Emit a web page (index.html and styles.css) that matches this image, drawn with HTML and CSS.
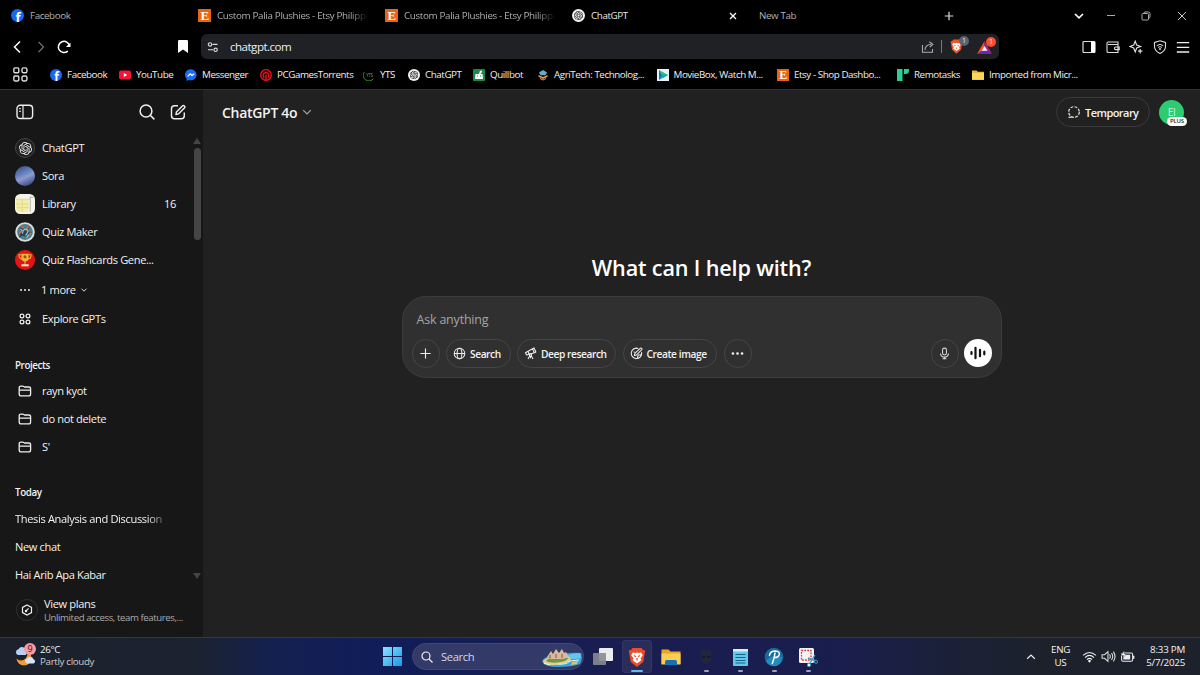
FILE: index.html
```html
<!DOCTYPE html>
<html lang="en">
<head>
    <meta charset="utf-8">
    <title>ChatGPT</title>
    <link rel="stylesheet" href="styles.css">
</head>
<body>
    <svg class="sprite" xmlns="http://www.w3.org/2000/svg">
        <symbol id="fb" viewBox="0 0 12 12"><circle cx="6" cy="6" r="6" fill="#1668ee"/><text x="6.3" y="11.6" text-anchor="middle" font-size="12" font-weight="700" font-family="Open Sans, sans-serif" fill="#fff">f</text></symbol>
        <symbol id="etsy" viewBox="0 0 12 12"><rect width="12" height="12" fill="#e9640f"/><text x="6" y="10.3" text-anchor="middle" font-size="12" font-weight="700" font-family="Liberation Serif, serif" fill="#fff">E</text></symbol>
        <symbol id="knot" viewBox="0 0 24 24"><path fill="currentColor" d="M22.2819 9.8211a5.9847 5.9847 0 0 0-.5157-4.9108 6.0462 6.0462 0 0 0-6.5098-2.9A6.0651 6.0651 0 0 0 4.9807 4.1818a5.9847 5.9847 0 0 0-3.9977 2.9 6.0462 6.0462 0 0 0 .7427 7.0966 5.98 5.98 0 0 0 .511 4.9107 6.051 6.051 0 0 0 6.5146 2.9001A5.9847 5.9847 0 0 0 13.2599 24a6.0557 6.0557 0 0 0 5.7718-4.2058 5.9894 5.9894 0 0 0 3.9977-2.9001 6.0557 6.0557 0 0 0-.7475-7.0729zm-9.022 12.6081a4.4755 4.4755 0 0 1-2.8764-1.0408l.1419-.0804 4.7783-2.7582a.7948.7948 0 0 0 .3927-.6813v-6.7369l2.02 1.1686a.071.071 0 0 1 .038.052v5.5826a4.504 4.504 0 0 1-4.4945 4.4944zm-9.6607-4.1254a4.4708 4.4708 0 0 1-.5346-3.0137l.142.0852 4.783 2.7582a.7712.7712 0 0 0 .7806 0l5.8428-3.3685v2.3324a.0804.0804 0 0 1-.0332.0615L9.74 19.9502a4.4992 4.4992 0 0 1-6.1408-1.6464zM2.3408 7.8956a4.485 4.485 0 0 1 2.3655-1.9728V11.6a.7664.7664 0 0 0 .3879.6765l5.8144 3.3543-2.0201 1.1685a.0757.0757 0 0 1-.071 0l-4.8303-2.7865A4.504 4.504 0 0 1 2.3408 7.872zm16.5963 3.8558L13.1038 8.364 15.1192 7.2a.0757.0757 0 0 1 .071 0l4.8303 2.7913a4.4944 4.4944 0 0 1-.6765 8.1042v-5.6772a.79.79 0 0 0-.407-.667zm2.0107-3.0231l-.142-.0852-4.7735-2.7818a.7759.7759 0 0 0-.7854 0L9.409 9.2297V6.8974a.0662.0662 0 0 1 .0284-.0615l4.8303-2.7866a4.4992 4.4992 0 0 1 6.6802 4.66zM8.3065 12.863l-2.02-1.1638a.0804.0804 0 0 1-.038-.0567V6.0742a4.4992 4.4992 0 0 1 7.3757-3.4537l-.142.0805L8.704 5.459a.7948.7948 0 0 0-.3927.6813zm1.0976-2.3654l2.602-1.4998 2.6069 1.4998v2.9994l-2.5974 1.4997-2.6067-1.4997Z"/></symbol>
        <symbol id="gpt" viewBox="0 0 12 12"><circle cx="6" cy="6" r="6" fill="#f2f2f2"/><use href="#knot" x="1.8" y="1.8" width="8.4" height="8.4" color="#111"/></symbol>
        <symbol id="folder" viewBox="0 0 14 12"><path d="M1.2 9V2.8Q1.2 1.1 2.9 1.1h1.7q.7 0 1.2.4l.7.5h4.2q1.9 0 1.9 1.8V9q0 1.9-1.9 1.9H3.1Q1.2 10.9 1.2 9zM1.2 5.2h11.4" fill="none" stroke="#eee" stroke-width="1.3"/></symbol>
    </svg>

    <div class="tabs">
        <div class="tab"><svg class="ico13"><use href="#fb"/></svg><span>Facebook</span></div>
        <div class="tab"><svg class="ico13"><use href="#etsy"/></svg><span class="fade">Custom Palia Plushies - Etsy Philippi</span></div>
        <div class="tab"><svg class="ico13"><use href="#etsy"/></svg><span class="fade">Custom Palia Plushies - Etsy Philippi</span></div>
        <div class="tab on"><svg class="ico13"><use href="#gpt"/></svg><span>ChatGPT</span>
            <svg class="tab_x" viewBox="0 0 8 8"><path d="M1 1l6 6M7 1L1 7" stroke="#fff" stroke-width="1.3"/></svg></div>
        <div class="tab"><span>New Tab</span></div>
        <svg class="tab_add" viewBox="0 0 10 10"><path d="M5 .8v8.4M.8 5h8.4" stroke="#ddd" stroke-width="1.2"/></svg>
        <div class="win_btns">
            <svg viewBox="0 0 12 12"><path d="M2 4l4 3.8L10 4" fill="none" stroke="#fff" stroke-width="1.7"/></svg>
            <svg viewBox="0 0 12 12"><path d="M2 5.500h8" stroke="#aaa"/></svg>
            <svg viewBox="0 0 12 12"><path d="M2 4.500q0-1 1-1h4.500q1 0 1 1V9q0 1-1 1H3q-1 0-1-1zM4 3.500V3q0-1 1-1h3.500q1.500 0 1.500 1.500V7q0 1-1.200 1" fill="none" stroke="#aaa"/></svg>
            <svg viewBox="0 0 12 12"><path d="M2 2l8 8M10 2l-8 8" stroke="#ccc"/></svg>
        </div>
    </div>

    <div class="toolbar">
        <div class="nav_btns">
            <svg viewBox="0 0 16 16"><path d="M11 2.500L5.500 8l5.500 5.500" fill="none" stroke="#fff" stroke-width="1.5"/></svg>
            <svg viewBox="0 0 16 16"><path d="M5.500 2.800L10.500 8l-5 5.200" fill="none" stroke="#777" stroke-width="1.2"/></svg>
            <svg viewBox="0 0 16 16"><path d="M11.800 12.100A5.600 5.600 0 1 1 13.500 7" fill="none" stroke="#fff" stroke-width="1.5"/><path d="M14.500 3.500v4.400H9.900z" fill="#fff"/></svg>
        </div>
        <svg class="mark" viewBox="0 0 10 13"><path d="M0 1.200Q0 0 1.200 0h7.600Q10 0 10 1.200V13L5 9.500 0 13z" fill="#fff"/></svg>
        <div class="address">
            <svg class="tune" viewBox="0 0 12 12"><g fill="none" stroke="#ddd" stroke-width="1.1"><circle cx="3" cy="3.400" r="1.700"/><path d="M5.500 3.400h5M1 8.800h5"/><circle cx="8.600" cy="8.800" r="1.700"/></g></svg>
            <span class="url">chatgpt.com</span>
            <svg class="share" viewBox="0 0 14 14"><path d="M1.500 5v7.300h10V9M4 10q0-5 6-5.800M8.300 1.800l3.500 2.400-3 2.800" fill="none" stroke="#aaa" stroke-width="1.1"/></svg>
            <i class="bar"></i>
            <div class="shield">
                <svg viewBox="0 0 12 14"><path d="M3 .5h6l1 1.300 1.500.4-.3 2.300-1 5.500L6 13.700 1.800 10l-1-5.500L.5 2.200 2 1.800z" fill="#f3521f"/><path d="M3 3.500l2 .5L6 3.600 7 4l2-.5 1 1.800-1.500 2.200.5 1.500-3 2.200L3 9l.5-1.500L2 5.300z" fill="#fff"/><path d="M4 6l1 .6M8 6l-1 .6M6 8v1" stroke="#f3521f"/></svg>
                <b class="count gray">1</b>
            </div>
            <div class="shield bat">
                <svg viewBox="0 0 14 12"><path d="M7 0L0 12l7-4z" fill="#ff4a22"/><path d="M7 0l7 12-7-4z" fill="#a32888"/><path d="M0 12h14L7 7.500z" fill="#642bb0"/><path d="M7 4.500L4.300 9h5.400z" fill="#fff"/></svg>
                <b class="count">1</b>
            </div>
        </div>
        <div class="tools">
            <svg viewBox="0 0 14 14"><rect x="1" y="1.500" width="12" height="11" rx="1" fill="none" stroke="#ddd" stroke-width="1.2"/><path d="M9 1.500h4v11H9z" fill="#fff"/></svg>
            <svg viewBox="0 0 14 14"><path d="M12 4.500V2H2.300Q1 2 1 3.300v7.900q0 1.300 1.300 1.300H12V4.500H2M13.200 7H9.500q-1 0-1 1.300t1 1.300h3.700z" fill="none" stroke="#ddd" stroke-width="1.1"/></svg>
            <svg viewBox="0 0 14 14"><path d="M6.200 1.200l1.500 3.900 3.800 1.400-3.800 1.500-1.500 3.900L4.700 8 .9 6.500l3.800-1.400z" fill="none" stroke="#ddd" stroke-width="1.2"/><path d="M11.200 9v4.400M9 11.200h4.400" stroke="#ddd" stroke-width="1.2"/></svg>
            <svg viewBox="0 0 14 14"><path d="M7 .8l5.500 1.700v4.300Q12.300 11 7 13.400 1.700 11 1.500 6.800V2.500z" fill="none" stroke="#ddd" stroke-width="1.1"/><path d="M3.700 5.700q3.300-2.700 6.600 0M5 7.400q2-1.600 4 0" fill="none" stroke="#ddd"/><circle cx="7" cy="9" r="1" fill="#ddd"/></svg>
            <svg viewBox="0 0 14 14"><path d="M.8 2.600h12.400M.8 7.300h12.400M.8 12h12.400" stroke="#eee" stroke-width="1.3"/></svg>
        </div>
    </div>

    <div class="bookmarks">
        <svg class="apps" viewBox="0 0 14 14"><g fill="none" stroke="#ddd" stroke-width="1.3"><rect x=".8" y=".8" width="4.600" height="4.600" rx="1"/><rect x="8.400" y=".8" width="4.600" height="4.600" rx="1.500"/><rect x=".8" y="8.400" width="4.600" height="4.600" rx="1"/><rect x="8.400" y="8.400" width="4.600" height="4.600" rx="1.500"/></g></svg>
        <div class="bm"><svg><use href="#fb"/></svg>Facebook</div>
        <div class="bm"><svg viewBox="0 0 12 12"><rect y="1.600" width="12" height="8.800" rx="2" fill="#f5123b"/><path d="M4.800 4v4l3.400-2z" fill="#fff"/></svg>YouTube</div>
        <div class="bm"><svg viewBox="0 0 12 12"><path d="M6 .3a5.700 5.500 0 1 1-2.300 10.600L1.500 12V9.500A5.700 5.500 0 0 1 6 .3z" fill="#1a6cf5"/><path d="M2.700 7.400l2.500-2.600L7 6.400l2.300-1.700" fill="none" stroke="#fff" stroke-width="1.2"/></svg>Messenger</div>
        <div class="bm"><svg viewBox="0 0 12 12"><circle cx="6" cy="6" r="5.300" fill="#200" stroke="#f01520" stroke-width="1.3"/><path d="M6 5.500V12M4.300 8.700a2.800 2.800 0 1 1 3.400 0" fill="none" stroke="#f01520" stroke-width="1.3"/></svg>PCGamesTorrents</div>
        <div class="bm"><svg viewBox="0 0 12 12"><path d="M1.200 3.200A5.500 5.500 0 0 0 10.500 9.500" fill="none" stroke="#3c8c28"/><text x="6.300" y="7.500" text-anchor="middle" font-size="4.800" font-family="Open Sans, sans-serif" fill="#5aa83e">YTS</text></svg>YTS</div>
        <div class="bm"><svg><use href="#gpt"/></svg>ChatGPT</div>
        <div class="bm"><svg viewBox="0 0 12 12"><rect width="12" height="12" rx="1" fill="#178a4c"/><path d="M2.500 5h7l.5 5H2zM7 1.800h2V3L7.400 5H6z" fill="#fff"/><path d="M4 7h1M7 7h1" stroke="#178a4c"/></svg>Quillbot</div>
        <div class="bm"><svg viewBox="0 0 12 12"><path d="M2 3.500L6 1l4 2.500-1.500 2.700H3.500z" fill="#61afd0"/><path d="M1.500 6L6 8l4.500-2v1.800L6 10 1.500 7.800z" fill="#e99648"/><path d="M3 9l3 1.400L9 9v1l-3 1.500L3 10z" fill="#e99648"/></svg>AgriTech: Technolog...</div>
        <div class="bm"><svg viewBox="0 0 12 12"><rect width="12" height="12" fill="#e8f2f8"/><path d="M2 1v10l4-5z" fill="#1769d2"/><path d="M2 1l9 5-5 3z" fill="#28c07a"/><path d="M2 11l9-5-5-.5z" fill="#16a1ce"/></svg>MovieBox, Watch M...</div>
        <div class="bm"><svg><use href="#etsy"/></svg>Etsy - Shop Dashbo...</div>
        <div class="bm"><svg viewBox="0 0 12 12"><path d="M0 0h5.500v12H0zM7 0h5v1.500Q12 5 8.500 5H7z" fill="#28cf96"/></svg>Remotasks</div>
        <div class="bm"><svg viewBox="0 0 12 12"><path d="M0 1.500h4.500l1.300 1.300H12v8H0z" fill="#e9b936"/><path d="M0 4h12v6.800H0z" fill="#ffd65c"/></svg>Imported from Micr...</div>
    </div>

    <div class="app">
        <div class="sidebar">
            <div class="side_hd">
                <svg class="toggle" viewBox="0 0 18 16"><rect x="1" y="1.300" width="15.600" height="13.200" rx="3.300" fill="none" stroke="#eee" stroke-width="1.4"/><path d="M7 1.300v13.200" stroke="#eee" stroke-width="1.2"/><path d="M3 4.700h2M3 7.300h2" stroke="#eee"/></svg>
                <svg class="find" viewBox="0 0 16 16"><circle cx="7" cy="7" r="5.900" fill="none" stroke="#eee" stroke-width="1.5"/><path d="M11.200 11.200l4.200 4.200" stroke="#eee" stroke-width="1.5"/></svg>
                <svg class="compose" viewBox="0 0 16 16"><path d="M8 1.800H4.500Q1.500 1.800 1.500 4.800v7q0 3 3 3h6.800q3 0 3-3V8.500M6 10.500l.4-2.600 6-6q1-1 2 0t0 2l-6 6z" fill="none" stroke="#eee" stroke-width="1.45" stroke-linejoin="round"/></svg>
            </div>
            <div class="side_list">
                <div class="item"><span class="av dark"><svg viewBox="0 0 24 24"><use href="#knot"/></svg></span>ChatGPT</div>
                <div class="item"><span class="av sora"></span>Sora</div>
                <div class="item"><svg class="av" viewBox="0 0 19 19"><rect width="19" height="19" rx="5" fill="#f4f4ea"/><path d="M1 5h12v12H3q-2-2-2-4z" fill="#f3efa2"/><path d="M1 5h13M1 9.500h12M7 5v12M2 13h11" stroke="#ddd68a" stroke-width=".8"/><path d="M14 3h4M14.500 3v14" stroke="#a4a8b8" stroke-width=".8"/></svg>Library<em>16</em></div>
                <div class="item"><svg class="av" viewBox="0 0 19 19"><circle cx="9.500" cy="9.500" r="9.300" fill="#dcdcdc"/><circle cx="9.500" cy="9.500" r="7.500" fill="#4e7f8e"/><path d="M5 5l4 2 5-3-2 5 4 1-5 4-4-1-3 2 1-5z" fill="#333e55"/><path d="M6 4l2 2M13 4l-3 4M4 11l3-3M13 13l2-3" stroke="#d46d43" stroke-width="1.5"/><path d="M7 11q1-5 4-4t-1 6M5 7l2 1M11 15l2-3" fill="none" stroke="#73d0d4" stroke-width="1.2"/></svg>Quiz Maker</div>
                <div class="item"><svg class="av" viewBox="0 0 19 19"><circle cx="9.500" cy="9.500" r="9.500" fill="#e31414"/><path d="M6 3.500h7v4q0 3-3.500 3.500Q6 10.500 6 7.500z" fill="#f2b634"/><path d="M6 4.500H3.700q0 4 3 4M13 4.500h2.300q0 4-3 4M9.500 10v4" fill="none" stroke="#f2b634"/><path d="M6 13.500h7v2H6z" fill="#f6e6d2"/><circle cx="9.500" cy="6.500" r="1.500" fill="#9c501c"/></svg>Quiz Flashcards Gene...</div>
                <div class="item more"><svg class="sm" viewBox="0 0 14 14"><g fill="#eee"><circle cx="2.400" cy="7" r="1.150"/><circle cx="7" cy="7" r="1.150"/><circle cx="11.600" cy="7" r="1.150"/></g></svg>1 more<svg class="chev" viewBox="0 0 8 8"><path d="M1.500 2.700L4 5.200l2.500-2.500" fill="none" stroke="#ddd"/></svg></div>
                <div class="item explore"><svg class="sm" viewBox="0 0 14 14"><g fill="none" stroke="#eee" stroke-width="1.25"><circle cx="4" cy="4" r="1.900"/><circle cx="10" cy="4" r="1.900"/><circle cx="4" cy="10" r="1.900"/><circle cx="10" cy="10" r="1.900"/></g></svg>Explore GPTs</div>
                <h3>Projects</h3>
                <div class="item"><svg class="sm"><use href="#folder"/></svg>rayn kyot</div>
                <div class="item"><svg class="sm"><use href="#folder"/></svg>do not delete</div>
                <div class="item"><svg class="sm"><use href="#folder"/></svg>S'</div>
                <h3 class="today">Today</h3>
                <div class="item"><span class="chat_fade">Thesis Analysis and Discussion</span></div>
                <div class="item">New chat</div>
                <div class="item">Hai Arib Apa Kabar</div>
            </div>
            <div class="plans">
                <span class="plan_ico"><svg viewBox="0 0 12 12"><path d="M6 .9l4.500 2.500v5.200L6 11.100 1.500 8.600V3.400z" fill="none" stroke="#eee" stroke-width="1.2"/><path d="M4.800 7.200l2.800-2.800" stroke="#eee" stroke-width="1.2"/><circle cx="5" cy="7" r="1.200" fill="#eee"/></svg></span>
                <div><p>View plans</p><small>Unlimited access, team features,...</small></div>
            </div>
            <div class="scroll"><i class="up"></i><i class="thumb"></i><i class="down"></i></div>
        </div>

        <div class="main">
            <div class="main_hd">
                <h2>ChatGPT 4o</h2>
                <svg class="model_chev" viewBox="0 0 10 10"><path d="M1.200 3.200L5 7l3.800-3.800" fill="none" stroke="#aaa" stroke-width="1.1"/></svg>
                <span class="temp"><svg viewBox="0 0 14 14"><circle cx="7" cy="7" r="5.300" fill="none" stroke="#eee" stroke-width="1.2" stroke-dasharray="2.800 1.360"/><path d="M1.500 12.300h3" stroke="#eee" stroke-width="1.2"/></svg>Temporary</span>
                <span class="user">EI<b>PLUS</b></span>
            </div>
            <h1>What can I help with?</h1>
            <div class="composer">
                <p>Ask anything</p>
                <div class="row">
                    <span class="pill round"><svg viewBox="0 0 14 14"><path d="M7 1.500v11M1.500 7h11" stroke="#eee" stroke-width="1.2"/></svg></span>
                    <span class="pill search"><svg viewBox="0 0 14 14"><g fill="none" stroke="#eee" stroke-width="1.1"><circle cx="7" cy="7" r="5.700"/><ellipse cx="7" cy="7" rx="2.600" ry="5.700"/><path d="M1.300 7h11.400"/></g></svg>Search</span>
                    <span class="pill deep"><svg viewBox="0 0 14 14"><g fill="none" stroke="#eee" stroke-width="1.15" stroke-linejoin="round"><path d="M1.500 6.200l7.700-4.300 2 4.200-8.300 2.600zM9.200 1.900l1.600-.9 2 4.300-1.600.8M4.300 4.700l1.300 3.100"/><circle cx="7" cy="8.500" r="1.200"/><path d="M6.300 9.500l-2 3.500M7.700 9.500l2.100 3.500M7 9.700V12"/></g></svg>Deep research</span>
                    <span class="pill create"><svg viewBox="0 0 14 14"><path d="M9 1.600A5.600 5.600 0 1 0 12.500 6c.2 2-1 2.800-2.600 2.700-1.800-.1-1.600 1.200-1.500 2.200 0 1.200-1 1.800-2.500 1.600M4.700 9.200l.7-2.500L11 1.400q1-.7 1.700.2.500.8-.2 1.500L7 8.500zM4 5.500h1" fill="none" stroke="#eee" stroke-width="1.15" stroke-linejoin="round"/></svg>Create image</span>
                    <span class="pill round"><svg viewBox="0 0 14 14"><g fill="#eee"><circle cx="2.100" cy="7" r="1.400"/><circle cx="7" cy="7" r="1.400"/><circle cx="11.900" cy="7" r="1.400"/></g></svg></span>
                    <span class="pill round mic"><svg viewBox="0 0 14 14"><rect x="4.900" y="1.200" width="4.200" height="7.300" rx="2.100" fill="none" stroke="#ddd" stroke-width="1.1"/><path d="M2.800 6.900a4.200 4 0 0 0 8.400 0M7 11v2M5 12.700h4" fill="none" stroke="#ddd" stroke-width="1.2"/></svg></span>
                    <span class="voice"><svg viewBox="0 0 16 14"><path d="M1.500 6v2M5.500 1.800v10.400M10 3.800v6.400M14.300 5.700v2.600" stroke="#111" stroke-width="2.2" stroke-linecap="round"/></svg></span>
                </div>
            </div>
        </div>
    </div>

    <div class="taskbar">
        <div class="weather">
            <svg viewBox="0 0 22 24"><circle cx="9" cy="15" r="7.500" fill="#f59b32"/><circle cx="6" cy="11" r="6.500" fill="#1c212b"/><path d="M3 12a3 3 0 0 1 .5-5.800A4 4 0 0 1 11 7v5z" fill="#b9cdf5"/><path d="M12 20.500a2.600 2.600 0 0 1 0-5 3.600 3.600 0 0 1 6.500.8 2.200 2.200 0 0 1 0 4.200z" fill="#d5e3fb"/><circle cx="15" cy="6" r="6" fill="#f79aa2"/><text x="15" y="9.400" text-anchor="middle" font-size="9" font-family="Open Sans, sans-serif" fill="#3b1118">9</text></svg>
            <div>26°C<br><span>Partly cloudy</span></div>
        </div>
        <div class="dock">
            <span class="start"><svg viewBox="0 0 19 19"><defs><linearGradient id="win" x2="1" y2="1"><stop stop-color="#8be2fc"/><stop offset="1" stop-color="#149be8"/></linearGradient></defs><path d="M0 0h9v9H0zM10 0h9v9h-9zM0 10h9v9H0zM10 10h9v9h-9z" fill="url(#win)"/></svg></span>
            <div class="task_search">
                <svg class="lens" viewBox="0 0 12 12"><circle cx="5" cy="5" r="4" fill="none" stroke="#eee" stroke-width="1.2"/><path d="M8 8l3.500 3.500" stroke="#eee" stroke-width="1.3"/></svg>
                <span>Search</span>
                <svg class="island" viewBox="0 0 40 20"><path d="M0 14q3-5 10-5l8-1q8-3 21-2 2 6-1 11-8 3-22 3Q2 20 0 14z" fill="#39a5dc"/><path d="M22 10q7-4 16-4l1 5q-8 2-14 0z" fill="#62c7ed"/><path d="M1 14q5-5 13-4h13q5 3-3 6-12 4-22 1z" fill="#e2cf92"/><path d="M4 14q4-5 9-3h14l-4 3q-9 3-17 1z" fill="#6f9a45"/><path d="M5 10l2-3 2-3 2 3 3-5 3 4 3-4 2 4 2-1 3 5-6 2H9z" fill="#d8b99a"/><path d="M8 8v3M14 7v4M20 7v4" stroke="#7a5b48"/><path d="M16 17q8 1 12-3l9-1M2 16l6 2" fill="none" stroke="#dff6fb"/><path d="M30 15l6-1-1 3-6 1z" fill="#e6bf62"/></svg>
            </div>
            <span class="dock_i"><svg viewBox="0 0 20 20"><rect x="6" y="1" width="14" height="13" rx="1" fill="#ececef"/><rect x="0" y="6" width="13" height="12" rx="1" fill="#888c92" opacity=".9"/></svg></span>
            <span class="dock_i on"><svg viewBox="0 0 18 20"><path d="M4.500 1h9l1.500 2 2.300.6-.6 3-1.500 8.400L9 20l-6.200-5L1.300 6.600l-.6-3L3 3z" fill="#ee4b2b"/><path d="M5 5.500l2.500.6L9 5.500l1.500.6 2.500-.6 1.800 2.500-2.300 3.300.8 2L9 16.500l-4.300-3.200.8-2L3.200 8z" fill="#fff"/><path d="M6 8.500l2 1.200M12 8.500l-2 1.200M9 11v2.500" stroke="#ee4b2b" stroke-width="1.3"/></svg></span>
            <span class="dock_i"><svg viewBox="0 0 20 20"><path d="M.5 2.500h7l2 2h10V17H.5z" fill="#e8a52a"/><path d="M.5 6.500h19v11H.5z" fill="#fccd54"/><path d="M4 18v-3.500Q4 13 5.500 13h9q1.500 0 1.500 1.500V18z" fill="#1473b8"/></svg></span>
            <span class="dock_i open"><svg viewBox="0 0 20 20"><path d="M5 4q5-3 10 0v5q1 5-2 7-3 2-6 0-3-2-2-7z" fill="#22263d"/><path d="M6 9h3v2H6zM11 9h3v2h-3z" fill="#151832"/></svg></span>
            <span class="dock_i open"><svg viewBox="0 0 20 20"><rect x="3" y="2" width="15" height="17" rx="1" fill="#62c8e8"/><path d="M3 2h15v2.500H3z" fill="#d8eef2"/><path d="M5.500 7.500h10M5.500 10.500h10M5.500 13.500h10M5.500 16h10" stroke="#16658c" stroke-width="1.1"/></svg></span>
            <span class="dock_i open"><svg viewBox="0 0 20 20"><circle cx="10" cy="10" r="9.300" fill="#176a9c"/><path d="M2 14Q8 7 18 10q-1 9-8 9.300Q4 19 2 14z" fill="#258bb8"/><path d="M8.300 16.500q2-5 2.700-10.500M5.500 8.500Q6 4 11.500 4q4.500.3 3.700 3.700Q14 11 10 10.500" fill="none" stroke="#fff" stroke-width="1.5" stroke-linecap="round"/></svg></span>
            <span class="dock_i open"><svg viewBox="0 0 20 20"><rect x="1" y="1" width="15" height="15" rx="1.500" fill="#f2f2f2"/><rect x="3.500" y="3.500" width="9.500" height="9.500" fill="none" stroke="#d3372f" stroke-width="1.3" stroke-dasharray="1.700 1.200"/><path d="M11 17.500L17 8M18 14l-8-3" stroke="#4695c7" stroke-width="1.4"/><circle cx="11" cy="18" r="1.700" fill="#f2f2f2" stroke="#4695c7"/><circle cx="18" cy="14.800" r="1.600" fill="#222850" stroke="#4695c7"/></svg></span>
        </div>
        <div class="tray">
            <svg class="tray_up" viewBox="0 0 10 10"><path d="M1.200 6.700L5 3l3.800 3.700" fill="none" stroke="#eee" stroke-width="1.2"/></svg>
            <div class="lang">ENG<br>US</div>
            <svg class="wifi" viewBox="0 0 14 12"><g fill="none" stroke="#eee"><path d="M1 5q6-5.500 12 0M2.800 7q4.200-4 8.400 0M4.600 8.900q2.400-2.200 4.800 0"/></g><circle cx="7" cy="10.300" r="1.200" fill="#eee"/></svg>
            <svg class="vol" viewBox="0 0 14 12"><path d="M1 4.300h2.300L6.500 1.500v9L3.300 7.700H1zM8 4q1.300 2 0 4M9.800 2.800q2.300 3.200 0 6.400M11.500 1.500q3.200 4.500 0 9" fill="none" stroke="#ddd"/></svg>
            <svg class="batt" viewBox="0 0 14 12"><rect x="1.500" y="2.700" width="10.300" height="7.800" rx="1.500" fill="none" stroke="#eee"/><path d="M3 4.300h6.500v4.600H3zM12 5.200h1.400v3H12z" fill="#eee"/><path d="M4 .5L1 5h2.200L2.500 7.500 6 3.500H3.800z" fill="#fff" stroke="#1c212b" stroke-width=".4"/></svg>
            <div class="clock">8:33 PM<br>5/7/2025</div>
        </div>
    </div>
</body>
</html>
```

FILE: styles.css
```css
* { box-sizing: border-box; }
body { margin: 0; width: 1200px; height: 675px; overflow: hidden; background: #000; color: #f2f2f2; font-family: "Open Sans", "Noto Sans", sans-serif; font-size: 10.5px; letter-spacing: -0.3px; display: flex; flex-direction: column; white-space: nowrap; }
h1, h2, h3, p { margin: 0; font-weight: 600; }
svg { display: block; flex: none; }
i, em { font-style: normal; }
.sprite { display: none; }

/* tabs */
.tabs { height: 31px; flex: none; display: flex; align-items: center; }
.tab { width: 187px; padding: 0 11px 0; display: flex; align-items: center; color: #b0b0b0; font-size: 9.8px; letter-spacing: -0.4px; }
.tab .ico13 { width: 13px; height: 13px; margin: 0 6px 0 0; }
.tab.on { color: #e6e6e6; }
.tab .fade { -webkit-mask-image: linear-gradient(to right, #000 88%, transparent); mask-image: linear-gradient(to right, #000 88%, transparent); letter-spacing: -0.33px; }
.tab_x { width: 8px; height: 8px; margin: 0 0 0 auto; }
.tab_add { width: 10px; height: 10px; margin-left: 9px; }
.win_btns { margin-left: auto; padding-right: 12px; display: flex; gap: 22.5px; }
.win_btns svg { width: 12px; height: 12px; }
.win_btns svg:nth-child(2) { margin-left: -2px; }
.win_btns svg:nth-child(4) { margin-left: 2px; }

/* address row */
.toolbar { height: 31px; flex: none; display: flex; align-items: center; padding-left: 9px; }
.nav_btns { display: flex; gap: 7.5px; width: 169px; }
.nav_btns svg { width: 16px; height: 16px; }
.mark { width: 10px; height: 13px; margin-right: 13px; }
.address { width: 798px; height: 25px; background: #202124; border-radius: 6px; display: flex; align-items: center; padding: 0 3px 0 6px; }
.tune { width: 12px; height: 12px; margin-right: 11px; }
.url { font-size: 11.6px; letter-spacing: -0.53px; flex: 1; color: #eee; padding-bottom: 1px; }
.share { width: 14px; height: 14px; }
.bar { width: 1px; height: 13px; background: #777; margin: 0 8px 0 6px; }
.shield { width: 29px; position: relative; }
.shield svg { width: 13px; height: 15px; }
.shield.bat { width: 19px; margin-left: -2px; }
.shield.bat svg { width: 15px; height: 13px; margin-top: 1px; }
.count { position: absolute; left: 9px; top: -3px; width: 10px; height: 10px; border-radius: 5px; background: #fa4e32; font-size: 6.5px; line-height: 10px; text-align: center; font-weight: 400; }
.count.gray { background: #5a6273; }
.tools { margin-left: auto; display: flex; gap: 9.5px; padding-right: 10px; }
.tools svg { width: 14px; height: 14px; }

.bookmarks { height: 28px; flex: none; padding: 0 0 2px 13px; border-bottom: 1px solid #333; display: grid; grid-template-columns: 37px 69px 66px 75px 103px 45px 65px 64px 119.5px 120.5px 120px 75px 130px; align-items: center; font-size: 9.8px; letter-spacing: -0.43px; color: #f0f0f0; }
.apps { width: 15px; height: 15px; }
.bm { display: flex; align-items: center; gap: 5px; }
.bm svg { width: 12px; height: 12px; }

/* page */
.app { height: 547px; flex: none; display: flex; }
.sidebar { width: 203px; background: #171717; position: relative; display: flex; flex-direction: column; }
.side_hd { height: 44px; flex: none; display: flex; align-items: center; padding: 0 17px 1px 16px; }
.toggle { width: 18px; height: 16px; }
.find { width: 16px; height: 16px; margin-left: auto; margin-right: 15px; }
.compose { width: 16px; height: 16px; }
.side_list { padding: 0 27px 0 15px; height: 452px; flex: none; }
.item { height: 28.1px; display: flex; align-items: center; padding-bottom: 1px; font-size: 11.1px; letter-spacing: -0.37px; }
.item em { margin-left: auto; }
.item > svg, .item > .av { margin-top: 1px; }
.av { width: 20px; height: 20px; margin-right: 7px; border-radius: 50%; }
svg.av { border-radius: 0; }
.av.dark { border: 1px solid #444; background: #202020; padding: 2.5px; }
.av.dark svg { width: 13px; height: 13px; }
.av.sora { background: linear-gradient(155deg, #40548c 10%, #5f7dbb 35%, #8d9bce 55%, #42538c 85%); }
.sm { width: 14px; height: 12px; margin: 0 10px 0 3px; }
.more { margin-top: 1.5px; }
.more .sm { margin-right: 9px; }
.chev { width: 8px; height: 8px; margin-left: 4px; }
.explore { margin-top: 1px; }
.explore .sm { height: 14px; }
.side_list h3 { height: 16px; line-height: 16px; font-size: 9.8px; margin: 25px 0 2.5px; letter-spacing: -0.4px; }
.side_list h3.today { margin: 24px 0 4px; }
.chat_fade { letter-spacing: -0.36px; -webkit-mask-image: linear-gradient(to right, #000 90%, transparent 105%); mask-image: linear-gradient(to right, #000 90%, transparent 105%); }
.plans { display: flex; align-items: center; padding: 0 0 0 16px; gap: 6px; height: 48px; }
.plan_ico { width: 22px; height: 22px; border: 1px solid #303030; border-radius: 50%; padding: 4px; }
.plan_ico svg { width: 12px; height: 12px; }
.plans p { font-size: 11.1px; line-height: 15px; font-weight: 400; letter-spacing: -0.35px; }
.plans small { display: block; font-size: 9.6px; line-height: 14px; color: #aaa; letter-spacing: -0.4px; }
.scroll { position: absolute; right: 2px; top: 48px; width: 8px; height: 441px; display: flex; flex-direction: column; align-items: center; }
.scroll .up { border: 4px solid transparent; border-top: 0; border-bottom: 6px solid #444; }
.scroll .thumb { width: 7px; height: 92px; margin-top: 4px; background: #454545; border-radius: 4px; }
.scroll .down { border: 4px solid transparent; border-bottom: 0; border-top: 6px solid #444; margin-top: auto; }

.main { flex: 1; background: #212121; display: flex; flex-direction: column; align-items: center; }
.main_hd { width: 100%; height: 45px; display: flex; align-items: center; padding: 0 14px 1px 19px; }
.main_hd h2 { font-size: 14px; letter-spacing: -0.3px; color: #f2f2f2; }
.model_chev { width: 10px; height: 10px; margin-left: 5px; }
.temp { margin-left: auto; width: 94px; height: 30px; border: 1px solid #3a3a3a; border-radius: 15px; display: flex; align-items: center; padding-left: 10px; gap: 4px; font-size: 11px; font-weight: 600; letter-spacing: -0.55px; }
.temp svg { width: 14px; height: 14px; }
.user { position: relative; width: 25px; height: 25px; margin: 0 2px 0 9px; border-radius: 50%; background: #2ecc71; color: #d0f5df; font-size: 10px; line-height: 25px; text-align: center; }
.user b { position: absolute; left: 8px; top: 17px; width: 20px; height: 9px; border-radius: 5px; background: #fff; color: #222; font-size: 6px; line-height: 9px; letter-spacing: -0.2px; font-weight: 600; }
.main h1 { margin-top: 117px; line-height: 32px; font-size: 21.6px; letter-spacing: -0.15px; color: #fff; }
.composer { width: 600px; height: 82px; margin-top: 12px; background: #303030; border: 1px solid #3c3c3c; border-radius: 24px; padding: 14px 9px 0; }
.composer p { padding-left: 5px; font-size: 12.5px; line-height: 17px; font-weight: 400; color: #a5a5a5; letter-spacing: -0.2px; }
.row { display: flex; margin-top: 11px; gap: 6.5px; }
.pill { height: 29px; border: 1px solid #454545; border-radius: 15px; display: flex; align-items: center; padding-left: 6px; gap: 4px; font-size: 10.2px; font-weight: 600; letter-spacing: -0.42px; }
.pill svg { width: 13px; height: 13px; }
.round { width: 28px; padding: 0; justify-content: center; }
.search { width: 64.5px; }
.deep { width: 99px; }
.create { width: 94.5px; }
.mic { margin-left: auto; }
.voice { width: 28px; height: 28px; border-radius: 50%; background: #fff; display: flex; align-items: center; justify-content: center; margin-left: -1.5px; }
.voice svg { width: 16px; height: 14px; }

/* taskbar */
.taskbar { height: 38px; flex: none; border-top: 1px solid #343746; background: linear-gradient(to right, #1c212b 0, #1b2230 200px, #14204f 270px, #101d58 370px, #191d51 600px, #191d4e 830px, #1b2036 960px, #1c212c 1040px); display: flex; align-items: center; font-size: 9.8px; letter-spacing: -0.35px; }
.weather { width: 375px; display: flex; padding-left: 15px; gap: 3px; line-height: 12.5px; align-items: center; }
.weather svg { width: 22px; height: 24px; margin-top: -3px; }
.weather div { padding-bottom: 1px; }
.weather span { color: #ccc; }
.dock { display: flex; align-items: center; height: 37px; }
.start { width: 37px; padding-left: 8px; }
.start svg { width: 19px; height: 19px; }
.task_search { width: 172px; height: 27px; border-radius: 14px; background: #343a68; border: 1px solid #424773; display: flex; align-items: center; padding: 0 0 0 8px; margin-right: 2px; font-size: 11.2px; color: #d5d7e5; }
.lens { width: 12px; height: 12px; margin-right: 8px; }
.island { width: 40px; height: 20px; margin-left: auto; margin-right: 1px; }
.dock_i { width: 34.2px; height: 33px; position: relative; display: flex; align-items: center; justify-content: center; }
.dock_i svg { width: 20px; height: 20px; }
.dock_i.on { width: 30.2px; margin: 0 2px; background: #292d59; box-shadow: inset 0 0 0 1px #32366a; border-radius: 4px; }
.dock_i.open:after, .dock_i.on:after { content: ""; position: absolute; left: 15px; bottom: 1px; width: 5px; height: 2px; border-radius: 1px; background: #a0a3b6; }
.dock_i.on:after { left: 9px; width: 12px; background: #66b8f0; }
.tray { margin-left: auto; padding-right: 15px; display: flex; align-items: center; text-align: right; line-height: 12.5px; }
.tray_up { width: 10px; height: 10px; margin-right: 15px; }
.lang { width: 20px; text-align: center; margin-right: 11.5px; }
.wifi, .vol, .batt { width: 15px; height: 13px; margin-right: 4px; }
.clock { width: 46px; letter-spacing: -0.25px; }
```
